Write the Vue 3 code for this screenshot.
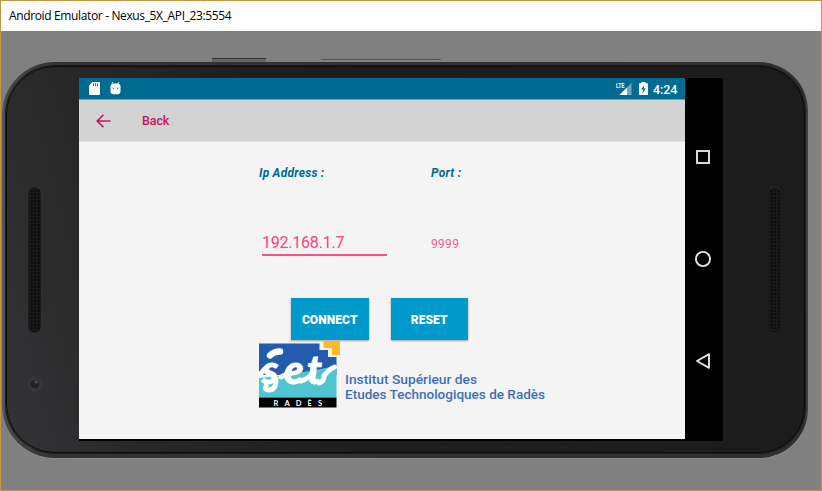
<script setup>
const title = 'Android Emulator - Nexus_5X_API_23:5554'
</script>

<template>
  <div class="window">
    <header class="titlebar"><span>{{ title }}</span></header>
    <main class="stage">
      <div class="side-buttons"><i class="power"></i><i class="volume"></i></div>
      <div class="phone">
        <div class="face">
          <div class="bezel bezel-left">
            <div class="speaker"></div>
            <div class="camera"><i></i></div>
          </div>
          <div class="screen">
            <section class="app">
              <div class="statusbar">
                <svg class="sd" width="11" height="13" viewBox="0 0 11 13">
                  <path d="M3.5 0H10Q11 0 11 1V12Q11 13 10 13H1Q0 13 0 12V3.5Z" fill="#fff" />
                  <path d="M4.5 1.5V4M6.5 1.5V4M8.5 1.5V4" stroke="#006b90" stroke-width="1" />
                </svg>
                <svg class="droid" width="11" height="13" viewBox="0 0 11 13">
                  <path d="M2 0L3.2 2M9 0L7.8 2" stroke="#d9edf4" stroke-width="1" />
                  <path d="M.5 4Q.8 1.5 3 1.5H8Q10.2 1.5 10.5 4V9Q10.5 12.2 7.5 12.2H3.5Q.5 12.2 .5 9Z" fill="#fff" />
                  <path d="M0 5.3H11" stroke="#a8d0df" stroke-width=".6" />
                  <circle cx="3.4" cy="6.6" r=".7" fill="#3f8fac" /><circle cx="7.6" cy="6.6" r=".7" fill="#3f8fac" />
                </svg>
                <span class="space"></span>
                <svg class="signal" width="16" height="14" viewBox="0 0 16 14">
                  <path d="M15.5 .8V13H3.5Z" fill="#6fa9bf" />
                  <path d="M11 5.5V13H3.5Z" fill="#fff" />
                  <path d="M0 0H8.5V6H0Z" fill="#006b90" />
                  <text x="0" y="6" textLength="8.4" lengthAdjust="spacingAndGlyphs">LTE</text>
                </svg>
                <svg class="battery" width="9" height="13" viewBox="0 0 9 13">
                  <path d="M2.5 0H6.5V1.2H8.3Q9 1.2 9 2V12.2Q9 13 8.2 13H.8Q0 13 0 12.2V2Q0 1.2 .7 1.2H2.5Z" fill="#fff" />
                  <path d="M5.3 2.8L2.2 7.4H4.2L3.6 11.2L6.8 6.5H4.8Z" fill="#006b90" />
                </svg>
                <time>4:24</time>
              </div>
              <nav class="toolbar">
                <svg width="15" height="14" viewBox="0 0 15 14" fill="none" stroke="#c2185b" stroke-width="1.6">
                  <path d="M14.5 7H1.3M7.5 .7L1.2 7L7.5 13.3" />
                </svg>
                <span>Back</span>
              </nav>
              <div class="content">
                <div class="fields">
                  <label>Ip Address :</label>
                  <label>Port :</label>
                  <div class="input">192.168.1.7</div>
                  <div class="port">9999</div>
                </div>
                <div class="actions">
                  <button>CONNECT</button>
                  <button>RESET</button>
                </div>
                <div class="brand">
                  <svg class="emblem" width="82" height="67" viewBox="0 0 82 67">
                    <path d="M0 2.5H60.5V9H69V16H77.5V34H0Z" fill="#245cad" />
                    <path d="M0 37Q30 34 77.5 25V56.5H0Z" fill="#50c4d0" />
                    <path d="M64.5 0H81V14H73V7H64.5Z" fill="#fdb927" />
                    <path d="M0 56.5H77.5V66.5H0Z" fill="#000" />
                    <text class="script" x="3 25 48" y="43">set</text>
                    <path d="M11 14.5Q15 10.5 21 10.5" class="brush dot" />
                    <path d="M1 34Q4 29 8 26M17 38Q17 49 10 49Q5 49 7 45M22 36Q26 35 30 30M42 40Q49 38 53 33M60 42Q65 41 65 35Q70 28 75.5 26" class="brush" />
                    <text class="rades" x="14.5" y="64.6" textLength="48.5">RADÈS</text>
                  </svg>
                  <svg class="institute" width="205" height="67" viewBox="0 0 205 67">
                    <text x="4" y="43" textLength="132" lengthAdjust="spacingAndGlyphs">Institut Supérieur des</text>
                    <text x="4" y="57.5" textLength="200" lengthAdjust="spacingAndGlyphs">Etudes Technologiques de Radès</text>
                  </svg>
                </div>
              </div>
            </section>
            <aside class="navbar">
              <svg width="16" height="16" viewBox="0 0 16 16"><rect x="2" y="2" width="12" height="12" /></svg>
              <svg width="18" height="18" viewBox="0 0 18 18"><circle cx="9" cy="9" r="7.1" /></svg>
              <svg width="16" height="18" viewBox="0 0 16 18"><path d="M14 2.2V15.8L2 9Z" stroke-linejoin="round" /></svg>
            </aside>
          </div>
          <div class="bezel bezel-right"><div class="speaker"></div></div>
        </div>
      </div>
    </main>
  </div>
</template>

<style>
body { margin: 0; overflow: hidden; }
</style>

<style scoped>
* { box-sizing: border-box; }
.window { width: 822px; height: 491px; border: 1px solid #c29547; background: #808080; font-family: Roboto, sans-serif; }
.titlebar { height: 30px; background: #fff; padding: 0 8px; display: flex; align-items: center; font: 12px/30px "Open Sans", sans-serif; color: #000; letter-spacing: -.36px; }
.stage { height: 459px; padding: 27px 0 0 1px; }
.side-buttons { height: 4px; display: flex; padding-left: 210px; align-items: flex-end; }
.side-buttons i { display: block; height: 4px; width: 54px; background: #656565; border-top: 1px solid #333; }
.side-buttons .volume { width: 120px; height: 3px; margin-left: 55px; background: #858585; border-color: #505050; }
.phone { width: 806px; height: 396px; border-radius: 53px 49px 49px 53px; padding: 4px 3px 5px 4px; background: linear-gradient(90deg, #5c5c5c 0, #484848 4px, #333 50px, #303030 760px, #303030 802px, #444); box-shadow: 0 1px 1px #8a8a8a; }
.face { height: 387px; border-radius: 49px 46px 46px 49px; border: 1px solid #0b0b0b; box-shadow: 0 0 0 1px #1b1b1b; background: linear-gradient(75deg, #343437, #29292a 14%, #1e1e1f 40%, #1c1c1d); display: flex; padding-top: 11px; }
.bezel-left { width: 72px; padding: 109px 0 0 21px; }
.bezel-right { padding: 109px 0 0 45px; }
.speaker { width: 13px; height: 146px; border-radius: 7px; background: radial-gradient(circle, #070707 .6px, #191919 1.1px) 1px 1px / 3.5px 3.45px; border: 1px solid #1b1b1b; box-shadow: 0 -1px 0 #303031; }
.camera { width: 16px; height: 16px; border-radius: 50%; background: #353538; margin: 43px 0 0 -1px; padding: 4px; }
.camera i { display: block; width: 8px; height: 8px; border-radius: 50%; background: radial-gradient(circle at 65% 25%, #66454d 0 1px, #24242c 2px, #18181d); }
.screen { width: 644px; height: 363px; background: #000; display: flex; border-radius: 0 2px 0 0; }
.app { width: 606px; height: 361px; background: #f4f4f4; }
.statusbar { height: 22px; background: #006b90; display: flex; align-items: center; padding: 0 7px 0 10px; border-bottom: 1px solid #6fa3b5; color: #fff; }
.droid { margin-left: 10px; margin-bottom: 1px; }
.space { flex: 1; }
.signal { margin-right: 7px; }
.signal text { font: bold 7px Roboto, sans-serif; fill: #fff; }
.battery { margin-right: 5px; }
time { font-size: 12.5px; font-weight: 500; line-height: 20px; padding-top: 2px; width: 25px; letter-spacing: -.1px; }
.toolbar { height: 42px; background: #d3d3d3; display: flex; align-items: center; padding-left: 17px; border-bottom: 1px solid #e0e0e0; color: #c2185b; }
.toolbar svg { display: block; }
.toolbar span { margin-left: 31px; font-size: 12.5px; font-weight: 500; line-height: 20px; padding-top: 1px; letter-spacing: -.1px; }
.content { padding-left: 180px; }
.fields { display: grid; grid-template-columns: 172px 140px; grid-template-rows: 78px 78px; }
label { color: #006b90; font-size: 12px; font-weight: 700; font-style: italic; line-height: 16px; padding-top: 23px; letter-spacing: .24px; }
.input { color: #ff4081; font-size: 16px; line-height: 20px; width: 125px; height: 23px; border-bottom: 2px solid #f65288; margin: 13px 0 0 3px; letter-spacing: -.22px; }
.port { color: #ff4081; font-size: 12px; line-height: 18px; margin-top: 15px; opacity: .85; letter-spacing: .3px; }
.actions { display: flex; gap: 22px; padding-left: 32px; height: 43px; }
button { width: 77.5px; height: 42px; padding: 1px 0 0; border: 0; background: #0099cc; color: #fff; font: 900 12px Roboto, sans-serif; letter-spacing: .1px; box-shadow: 0 1px 2px #0005; }
.brand { display: flex; height: 67px; }
.emblem { display: block; }
.script { font: italic 900 40px Lato, sans-serif; fill: #fff; stroke: #fff; stroke-width: .8; }
.brush { fill: none; stroke: #fff; stroke-width: 5; stroke-linecap: round; }
.dot { stroke-width: 6.5; }
.rades { font: bold 7.5px Lato, sans-serif; fill: #fff; }
.institute { display: block; fill: #3e6fb7; font: 500 12px Roboto, sans-serif; }
.navbar { width: 38px; display: flex; flex-direction: column; align-items: center; padding-top: 71px; gap: 84.5px; }
.navbar svg { fill: none; stroke: #e2e2e2; stroke-width: 1.9; margin-right: 2px; flex: none; }
</style>
